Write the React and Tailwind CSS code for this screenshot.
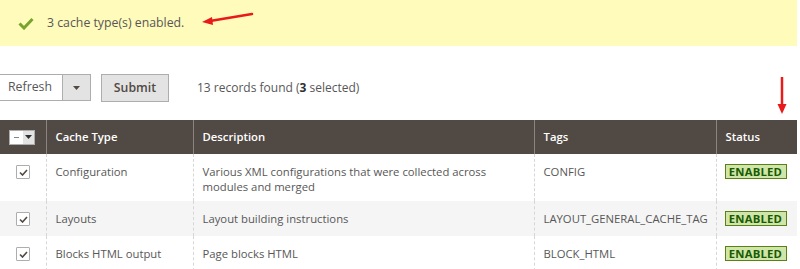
import React from "react";

const rows = [
  {
    type: "Configuration",
    desc: "Various XML configurations that were collected across modules and merged",
    tags: "CONFIG",
    h: "h-[47px]",
    bg: "bg-white",
  },
  {
    type: "Layouts",
    desc: "Layout building instructions",
    tags: "LAYOUT_GENERAL_CACHE_TAG",
    h: "h-[35px]",
    bg: "bg-[#f5f5f5]",
  },
  {
    type: "Blocks HTML output",
    desc: "Page blocks HTML",
    tags: "BLOCK_HTML",
    h: "h-[35px]",
    bg: "bg-white",
  },
];

const CheckBox = () => (
  <div className="w-[14px] h-[14px] border border-[#adadad] bg-white rounded-[1px] flex items-center justify-center">
    <svg width="9" height="7" viewBox="0 0 9 7">
      <path d="M1 3.5 L3.5 6 L8 1" fill="none" stroke="#514943" strokeWidth="1.6" />
    </svg>
  </div>
);

const cell = "align-top pt-[10px] leading-[15px] px-[9px] border-l border-dashed border-[#d6d6d6]";

const App = () => {
  return (
    <div
      className="w-[800px] h-[269px] overflow-hidden bg-white text-[12.3px] text-[#575757]"
      style={{ fontFamily: '"Open Sans", "Liberation Sans", sans-serif' }}
    >
      {/* Message */}
      <div className="relative w-[797px] h-[46px] bg-[#fffbbb] flex items-center pl-[18px]">
        <svg width="16" height="13" viewBox="0 0 16 13" className="mr-[13px]">
          <path d="M1.5 6.5 L6 11 L14.5 2" fill="none" stroke="#79a22e" strokeWidth="3" />
        </svg>
        <span className="text-[#575757]">3 cache type(s) enabled.</span>
        {/* annotation arrow */}
        <svg className="absolute left-[200px] top-[11px]" width="56" height="16" viewBox="0 0 56 16">
          <path d="M52 3 L10 10" stroke="#e81a1a" strokeWidth="2.5" strokeLinecap="round" />
          <path d="M2 11 L12 6 L13 14 Z" fill="#e81a1a" />
        </svg>
      </div>

      {/* Toolbar */}
      <div className="relative flex items-start h-[74px] pt-[28px]">
        <div className="flex h-[27px] items-stretch">
          <div className="w-[63px] border border-l-0 border-[#adadad] bg-white flex items-center pl-[8px] text-[#575757]">
            Refresh
          </div>
          <div className="w-[28px] border border-l-0 border-[#adadad] bg-[#e3e3e3] flex items-center justify-center">
            <svg width="7" height="4" viewBox="0 0 7 4">
              <path d="M0 0 L7 0 L3.5 4 Z" fill="#514943" />
            </svg>
          </div>
        </div>
        <button className="ml-[10px] h-[28px] w-[68px] border border-[#adadad] bg-[#e3e3e3] font-semibold text-[#514943]">
          Submit
        </button>
        <div className="ml-[28px] h-[27px] flex items-center text-[#575757] text-[12px]">
          <span>
            13 records found (<b className="font-bold text-[#303030]">3</b> selected)
          </span>
        </div>
        <svg className="absolute left-[776px] top-[30px]" width="12" height="40" viewBox="0 0 12 40">
          <path d="M6 1 L6 30" stroke="#e81a1a" strokeWidth="2.5" />
          <path d="M1.5 28 L10.5 28 L6 38 Z" fill="#e81a1a" />
        </svg>
      </div>

      {/* Grid */}
      <table className="w-[797px] border-collapse table-fixed text-[11.3px]">
        <colgroup>
          <col className="w-[46px]" />
          <col className="w-[147px]" />
          <col className="w-[341px]" />
          <col className="w-[182px]" />
          <col className="w-[81px]" />
        </colgroup>
        <thead>
          <tr className="h-[34px] bg-[#514943] text-white font-semibold text-left">
            <th className="px-[9px]">
              <div className="flex h-[15px] w-[26px] border border-[#adadad]">
                <div className="w-[13px] bg-white flex items-center justify-center">
                  <div className="w-[5px] h-[1px] bg-[#8a837f]" />
                </div>
                <div className="flex-1 bg-[#e3e3e3] flex items-center justify-center">
                  <svg width="7" height="4" viewBox="0 0 7 4">
                    <path d="M0 0 L7 0 L3.5 4 Z" fill="#303030" />
                  </svg>
                </div>
              </div>
            </th>
            <th className="px-[9px] border-l border-[#8a837f] font-semibold">Cache Type</th>
            <th className="px-[9px] border-l border-[#8a837f] font-semibold">Description</th>
            <th className="px-[9px] border-l border-[#8a837f] font-semibold">Tags</th>
            <th className="px-[9px] border-l border-[#8a837f] font-semibold">Status</th>
          </tr>
        </thead>
        <tbody>
          {rows.map((r) => (
            <tr key={r.type} className={`${r.h} ${r.bg}`}>
              <td className="align-top pt-[11px] pl-[16px]">
                <CheckBox />
              </td>
              <td className={cell}>{r.type}</td>
              <td className={cell}>{r.desc}</td>
              <td className={cell}>{r.tags}</td>
              <td className="align-top pt-[10px] pl-[8px] border-l border-dashed border-[#d6d6d6]">
                <span className="inline-flex items-center justify-center w-[62px] h-[15px] bg-[#d0e5a9] border border-[#5b8116] text-[#185b00] font-bold text-[11.3px] leading-none tracking-[0.2px]">
                  ENABLED
                </span>
              </td>
            </tr>
          ))}
        </tbody>
      </table>
    </div>
  );
};

export default App;
